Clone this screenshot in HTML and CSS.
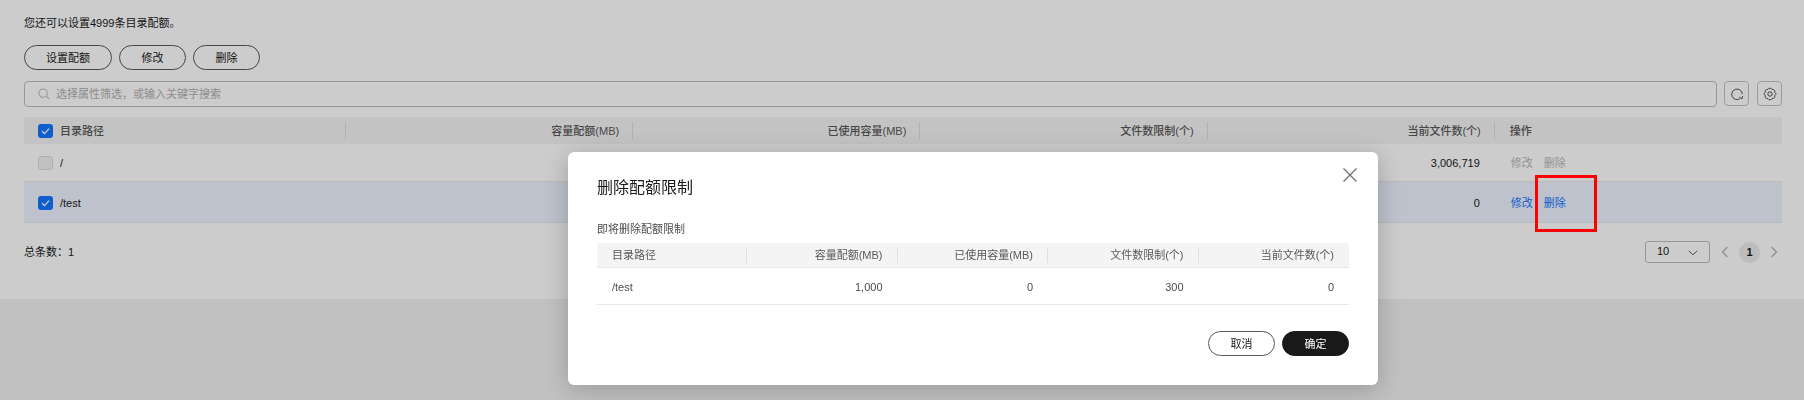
FILE: index.html
```html
<!DOCTYPE html>
<html lang="zh-CN">
<head>
<meta charset="utf-8">
<title>目录配额</title>
<link rel="stylesheet" href="styles.css">
</head>
<body>
<main class="card">
  <p class="intro">您还可以设置4999条目录配额。</p>
  <div class="toolbar">
    <button class="btn btn-set">设置配额</button>
    <button class="btn btn-edit">修改</button>
    <button class="btn btn-del">删除</button>
  </div>
  <div class="search-row">
    <div class="search">
      <svg class="search-icon" viewBox="0 0 14 14"><circle cx="6" cy="6" r="4.9"/><path d="M9.6 9.6 13 13"/></svg>
      <span>选择属性筛选&#xFF0C;或输入关键字搜索</span>
    </div>
    <button class="icon-btn"><svg viewBox="0 0 16 16"><path d="M11.300 13.400A6 6 0 1 1 14 8.200"/><path d="M10.800 11.400l2.900 2.300.7-3.400"/></svg></button>
    <button class="icon-btn"><svg viewBox="0 0 16 16"><path class="gear" d="M6.500 1.800Q8 .8 9.500 1.800L10.300 2.700 12 2.900Q13.300 3.300 13.500 4.800L13.400 6 14.500 7.200Q15 8 14.500 8.800L13.400 10 13.500 11.200Q13.300 12.700 12 13.100L10.300 13.300 9.500 14.200Q8 15.200 6.500 14.200L5.700 13.300 4 13.100Q2.700 12.700 2.500 11.200L2.600 10 1.500 8.800Q1 8 1.500 7.200L2.600 6 2.500 4.800Q2.700 3.300 4 2.900L5.700 2.700Z"/><circle cx="8" cy="8" r="2.500"/></svg></button>
  </div>

  <div class="grid head">
    <div class="cell"><span class="check on"><svg viewBox="0 0 14 14"><path d="M3.500 7.200 6 9.600l4.600-5"/></svg></span><span class="label">目录路径</span></div>
    <div class="cell num"><span class="label">容量配额(MB)</span></div>
    <div class="cell num"><span class="label">已使用容量(MB)</span></div>
    <div class="cell num"><span class="label">文件数限制(个)</span></div>
    <div class="cell num"><span class="label">当前文件数(个)</span></div>
    <div class="cell ops-head">操作</div>
  </div>
  <div class="grid row row-a">
    <div class="cell"><span class="check off"></span><span>/</span></div>
    <div class="cell num"></div>
    <div class="cell num"></div>
    <div class="cell num"></div>
    <div class="cell num val">3,006,719</div>
    <div class="cell ops disabled"><span>修改</span><span>删除</span></div>
  </div>
  <div class="grid row row-b">
    <div class="cell"><span class="check on"><svg viewBox="0 0 14 14"><path d="M3.500 7.200 6 9.600l4.600-5"/></svg></span><span>/test</span></div>
    <div class="cell num val">1,000</div>
    <div class="cell num val">0</div>
    <div class="cell num val">300</div>
    <div class="cell num val">0</div>
    <div class="cell ops links"><span>修改</span><span>删除</span></div>
  </div>

  <div class="footer">
    <span>总条数&#xFF1A;1</span>
    <div class="pager">
      <div class="size"><span>10</span><svg viewBox="0 0 12 7"><path d="M1 1l5 4.600L11 1"/></svg></div>
      <svg class="chev" viewBox="0 0 8 12"><path d="M6.500 1 1.500 6l5 5"/></svg>
      <span class="page">1</span>
      <svg class="chev" viewBox="0 0 8 12"><path d="M1.500 1l5 5-5 5"/></svg>
    </div>
  </div>
</main>

<div class="overlay"></div>
<div class="highlight"></div>

<section class="modal">
  <svg class="close" viewBox="0 0 14 14"><path d="M.5.5l13 13M13.500.5l-13 13"/></svg>
  <h2>删除配额限制</h2>
  <p class="sub">即将删除配额限制</p>
  <div class="m-grid m-head">
    <div class="m-first"><span class="m-label">目录路径</span></div>
    <div class="m-num"><span class="m-label">容量配额(MB)</span></div>
    <div class="m-num"><span class="m-label">已使用容量(MB)</span></div>
    <div class="m-num"><span class="m-label">文件数限制(个)</span></div>
    <div class="m-num"><span class="m-label m-last">当前文件数(个)</span></div>
  </div>
  <div class="m-grid m-row">
    <div class="m-first m-val">/test</div>
    <div class="m-num m-val">1,000</div>
    <div class="m-num m-val">0</div>
    <div class="m-num m-val">300</div>
    <div class="m-num m-val">0</div>
  </div>
  <div class="m-actions">
    <button class="btn m-btn">取消</button>
    <button class="btn m-btn primary">确定</button>
  </div>
</section>
</body>
</html>
```
FILE: styles.css
```css
* { box-sizing: border-box; }
html, body { margin: 0; height: 400px; overflow: hidden; }
body {
  background: #f2f2f2;
  color: #191919;
  font: 11px/16px "Liberation Sans", "Noto Sans CJK SC", sans-serif;
}
.card { height: 299px; background: #fff; padding: 15px 22px 0 24px; }
.intro { margin: 0 0 14px; color: #191919; }
button { font: inherit; color: inherit; background: none; padding: 0; cursor: pointer; }

.toolbar { display: flex; gap: 7px; height: 25px; }
.btn { height: 25px; border: 1px solid #595959; border-radius: 13px; background: #fff; }
.btn-set { width: 88px; }
.btn-edit { width: 67px; }
.btn-del { width: 67px; }

.search-row { display: flex; align-items: flex-start; margin-top: 11px; height: 26px; margin-bottom: 10px; }
.search {
  flex: 1; height: 26px; display: flex; align-items: center; gap: 6px;
  padding-left: 13px; border: 1px solid #bfbfbf; border-radius: 4px; color: #b0b0b0;
}
.search-icon { width: 12px; height: 12px; fill: none; stroke: #bdbdbd; stroke-width: 1.200; }
.icon-btn {
  width: 25px; height: 25px; margin-left: 7px; display: flex; align-items: center; justify-content: center;
  border: 1px solid #c4c4c4; border-radius: 4px;
}
.icon-btn + .icon-btn { margin-left: 8px; }
.icon-btn svg { width: 14px; height: 14px; fill: none; stroke: #4d4d4d; stroke-width: 1.100; }

.grid { display: grid; grid-template-columns: 322px repeat(5, 287.200px); }
.cell { display: flex; align-items: center; }
.num { justify-content: flex-end; text-align: right; }
.head { height: 27px; background: #f4f4f4; color: #595959; font-weight: 500; }
.label { flex: 1; height: 18px; line-height: 18px; border-right: 1px solid #dfdfdf; }
.cell:first-child .label { margin-left: 7px; }
.num .label { padding-right: 13px; }
.ops-head { padding-left: 15px; }
.row { border-bottom: 1px solid #e8e8e8; }
.row-a { height: 38px; }
.row-b { height: 41px; padding-top: 1px; background: #edf3ff; border-bottom-color: #e4e8f0; }
.row .cell:first-child span:last-child { margin-left: 7px; }
.val { padding-right: 15px; }
.check { width: 15px; height: 14px; margin-left: 14px; border-radius: 3px; flex: none; display: block; }
.check.on { background: #1476ff; }
.check.on svg { display: block; width: 15px; height: 14px; fill: none; stroke: #fff; stroke-width: 1.300; }
.check.off { background: #f2f2f2; border: 1px solid #dcdcdc; }
.ops { padding-left: 16px; gap: 11px; }
.disabled { color: #b8b8b8; }
.links { color: #1476ff; }

.footer { display: flex; justify-content: space-between; align-items: center; margin-top: 18px; height: 22px; color: #191919; }
.pager { display: flex; align-items: center; }
.size {
  width: 65px; height: 22px; display: flex; align-items: center; justify-content: space-between;
  padding: 0 11px 2px 11px; border: 1px solid #bfbfbf; border-radius: 3px; font-size: 11px;
}
.size svg { width: 10px; height: 6px; margin-top: 3px; fill: none; stroke: #595959; stroke-width: 1.200; }
.chev { width: 8px; height: 12px; margin: 0 0 0 11px; fill: none; stroke: #b5b5b5; stroke-width: 1.300; flex: none; }
.page {
  width: 21px; height: 21px; margin: 0 0 0 10px; border-radius: 50%; background: #ededed;
  text-align: center; line-height: 21px; font-weight: 700; color: #191919;
}
.page + .chev { margin-left: 10px; margin-right: 4px; }

.overlay { position: fixed; inset: 0; background: rgba(0, 0, 0, .2); }
.highlight { position: absolute; left: 1535px; top: 175px; width: 62px; height: 57px; border: 3.500px solid #f00; }

.modal {
  position: absolute; left: 568px; top: 152px; width: 810px; height: 233px;
  padding: 25px 29px 0; background: #fff; border-radius: 6px;
  box-shadow: 0 4px 24px rgba(0, 0, 0, .22);
}
.close { position: absolute; right: 21px; top: 16px; width: 14px; height: 14px; fill: none; stroke: #707070; stroke-width: 1.300; }
.modal h2 { margin: 0; font-size: 16px; line-height: 22px; font-weight: 400; color: #191919; }
.sub { margin: 22px 0 6px; height: 16px; line-height: 16px; color: #4d4d4d; }
.m-grid { display: grid; grid-template-columns: 150px repeat(4, 150.500px); }
.m-head { height: 25px; align-items: center; background: #f4f4f4; border-bottom: 1px solid #e8e8e8; color: #595959; }
.m-row { height: 37px; padding-top: 1px; align-items: center; border-bottom: 1px solid #e8e8e8; color: #4d4d4d; }
.m-label { display: block; height: 15px; line-height: 15px; border-right: 1px solid #dfdfdf; padding: 0 14px 0 15px; }
.m-num { text-align: right; }
.m-last { border-right: 0; padding-right: 15px; }
.m-val { padding: 0 15px; }
.m-actions { display: flex; justify-content: flex-end; gap: 7px; margin-top: 26px; }
.m-btn { width: 67px; }
.primary { background: #191919; border-color: #191919; color: #fff; }
```
